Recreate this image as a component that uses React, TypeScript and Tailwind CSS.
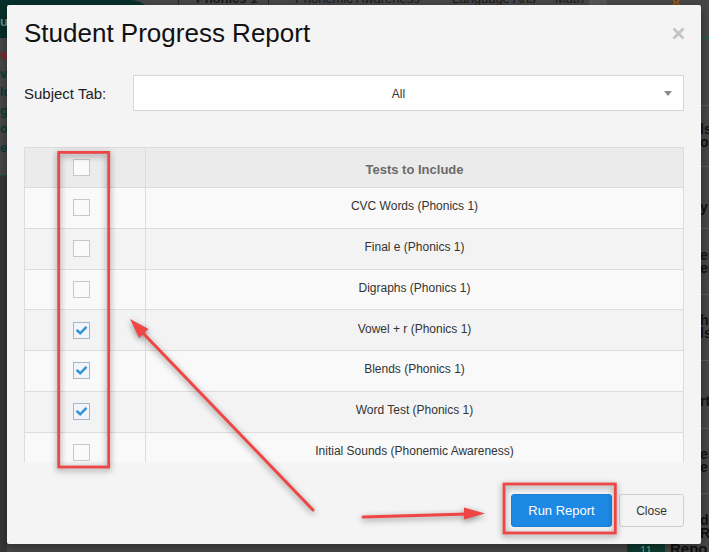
import React from "react";

const rows: { label: string; checked: boolean }[] = [
  { label: "CVC Words (Phonics 1)", checked: false },
  { label: "Final e (Phonics 1)", checked: false },
  { label: "Digraphs (Phonics 1)", checked: false },
  { label: "Vowel + r (Phonics 1)", checked: true },
  { label: "Blends (Phonics 1)", checked: true },
  { label: "Word Test (Phonics 1)", checked: true },
  { label: "Initial Sounds (Phonemic Awareness)", checked: false },
  { label: "Rhyming (Phonemic Awareness)", checked: false },
];

function Box({ checked }: { checked: boolean }) {
  return checked ? (
    <div className="w-[17px] h-[17px] border border-[#a9b6c4] bg-[#f1f5f9] flex items-center justify-center">
      <svg width="13" height="13" viewBox="0 0 13 13">
        <path d="M2.5 6.8 L5.2 9.3 L10.6 3.8" fill="none" stroke="#2f97d6" strokeWidth="2.6" strokeLinecap="square" />
      </svg>
    </div>
  ) : (
    <div className="w-[17px] h-[17px] border border-[#c8c8c8] bg-[#fafafa]" />
  );
}

export default function App() {
  const font = { fontFamily: '"Liberation Sans", Arial, sans-serif' };
  return (
    <div className="relative w-[709px] h-[552px] overflow-hidden bg-[#474747]" style={font}>
      {/* page behind the overlay */}
      <div className="absolute left-0 top-0 w-[153px] h-[38px] bg-[#07302a] rounded-tr-[22px]" />
      <div className="absolute left-0 top-[12px] text-[13px] text-[#6f8c86] font-bold">uc</div>
      <div className="absolute left-[178px] top-0 h-[5px] w-[430px] flex text-[13px] font-bold text-[#1a1a1a]">
        <div className="w-[91px] border-l border-r border-[#2a2a2a] relative overflow-hidden">
          <span className="absolute left-[17px] top-[-11px]">Phonics 1</span>
        </div>
        <div className="w-[180px] relative overflow-hidden">
          <span className="absolute left-[26px] top-[-11px] font-normal">Phonemic Awareness</span>
        </div>
        <div className="w-[100px] relative overflow-hidden">
          <span className="absolute left-[3px] top-[-11px] font-normal">Language Arts</span>
        </div>
        <div className="w-[40px] relative overflow-hidden">
          <span className="absolute left-[6px] top-[-11px] font-normal">Math</span>
        </div>
        <div className="w-[18px] bg-[#555]" />
      </div>
      <div className="absolute left-[672px] top-[-4px] text-[14px] font-bold text-[#9a5a12] leading-[14px]">8</div>
      <div className="absolute left-0 top-[38px] w-[7px] h-[138px] flex flex-col text-[13px] leading-[18.5px] font-bold pt-[8px]">
        <span className="text-[#9b1a1a]">st</span>
        <span className="text-[#0e3a34]">vb</span>
        <span className="text-[#0e3a34]">ld</span>
        <span className="text-[#0e3a34]">g</span>
        <span className="text-[#0e3a34]">ok</span>
        <span className="text-[#0e3a34]">e</span>
      </div>
      <div className="absolute left-0 top-[175px] w-[7px] h-[377px] bg-[#363636] border-t border-[#1f4a42]" />
      <div className="absolute left-[700px] top-0 w-[9px] h-[552px] overflow-hidden flex flex-col text-[14px] font-bold text-[#111] leading-[13px]">
        <div className="h-[40px] border-b-2 border-[#1d5a50]" />
        <div className="h-[67px]" />
        <div className="h-[63px] border-t border-[#5c5c5c] flex flex-col justify-center"><span>ls</span><span>or</span></div>
        <div className="h-[63px] border-t border-[#5c5c5c] flex flex-col justify-end pb-[14px]"><span>y</span></div>
        <div className="h-[67px] border-t border-[#5c5c5c] flex flex-col justify-center"><span>en</span><span>er</span></div>
        <div className="h-[67px] border-t border-[#5c5c5c] flex flex-col justify-center"><span>h</span><span>ls</span></div>
        <div className="h-[70px] border-t border-[#5c5c5c] flex flex-col justify-center pt-[14px]"><span>rt</span></div>
        <div className="h-[66px] border-t border-[#5c5c5c] flex flex-col justify-center"><span>es</span><span>e</span></div>
        <div className="h-[60px] border-t border-[#5c5c5c] flex flex-col justify-center pt-[8px]"><span>de</span><span>Repo</span></div>
      </div>
      <div className="absolute left-[627px] top-[544px] w-[38px] h-[12px] bg-[#0d3a31] text-center text-[12px] text-[#6a8] leading-[14px]">11</div>
      <div className="absolute left-[670px] top-[538px] text-[15px] font-bold text-[#111]">Repo</div>

      {/* modal */}
      <div className="absolute left-[7px] top-[5px] w-[694px] h-[539px] bg-[#f4f4f4] rounded-[2px] shadow-[0_3px_10px_rgba(0,0,0,0.4)] flex flex-col pl-[17px] pr-[17px] pt-[13px]">
        <div className="flex items-start justify-between">
          <h1 className="text-[26px] leading-[30px] text-[#111]">Student Progress Report</h1>
          <svg width="13" height="13" viewBox="0 0 13 13" className="mt-[9px] mr-[-1px]">
            <path d="M1.5 1.5 L11.5 11.5 M11.5 1.5 L1.5 11.5" stroke="#c3c3c3" strokeWidth="2.6" />
          </svg>
        </div>
        <div className="flex items-center mt-[27px]">
          <div className="w-[109px] text-[15px] text-[#222] pt-[2px]">Subject Tab:</div>
          <div className="flex-1 h-[36px] bg-white border border-[#d6d6d6] flex items-center relative">
            <div className="flex-1 text-center text-[12px] text-[#333] pr-[20px] pt-[1px]">All</div>
            <svg width="8" height="5" viewBox="0 0 8 5" className="absolute right-[11px] top-[15px]">
              <path d="M0 0 L8 0 L4 5 Z" fill="#8a8a8a" />
            </svg>
          </div>
        </div>
        <div className="mt-[36px] h-[315px] overflow-hidden border-l border-r border-t border-[#dcdcdc]">
          <div className="flex h-[40px] bg-[#ebebeb] border-b border-[#dcdcdc]">
            <div className="w-[121px] border-r border-[#dcdcdc] flex items-center pl-[48px]">
              <Box checked={false} />
            </div>
            <div className="flex-1 flex items-center justify-center text-[13px] font-bold text-[#6a6a6a] pt-[5px]">
              Tests to Include
            </div>
          </div>
          {rows.map((r, i) => (
            <div
              key={r.label}
              className={`flex h-[40.75px] border-b border-[#dcdcdc] ${i % 2 === 0 ? "bg-[#f9f9f9]" : "bg-[#f3f3f3]"}`}
            >
              <div className="w-[121px] border-r border-[#dcdcdc] flex items-center pl-[48px]">
                <Box checked={r.checked} />
              </div>
              <div className="flex-1 flex items-center justify-center text-[12px] text-[#333] pb-[3px]">{r.label}</div>
            </div>
          ))}
        </div>
        <div className="flex justify-end gap-[7px] mt-[32px]">
          <button className="w-[101px] h-[33px] bg-[#1e88e5] border border-[#1a7fd6] rounded-[3px] text-white text-[13px]">
            Run Report
          </button>
          <button className="w-[65px] h-[33px] bg-[#f4f4f4] border border-[#cfcfcf] rounded-[3px] text-[#333] text-[12px]">
            Close
          </button>
        </div>
      </div>

      {/* annotations */}
      <svg
        className="absolute left-0 top-0 pointer-events-none drop-shadow-[0_2px_3px_rgba(0,0,0,0.45)]"
        width="709"
        height="552"
        viewBox="0 0 709 552"
      >
        <rect x="58.7" y="152.4" width="50" height="314.6" fill="none" stroke="#f04545" strokeWidth="2.8" />
        <rect x="504" y="484" width="111.3" height="49" fill="none" stroke="#f04545" strokeWidth="2.8" />
        <line x1="313" y1="510" x2="141" y2="331" stroke="#f04545" strokeWidth="3" strokeLinecap="round" />
        <polygon points="130,319 148.5,328.9 139.1,337.9" fill="#f04545" />
        <line x1="363" y1="517" x2="468" y2="514" stroke="#f04545" strokeWidth="3" strokeLinecap="round" />
        <polygon points="485,513.5 464,507.5 464,519.5" fill="#f04545" />
      </svg>
    </div>
  );
}
